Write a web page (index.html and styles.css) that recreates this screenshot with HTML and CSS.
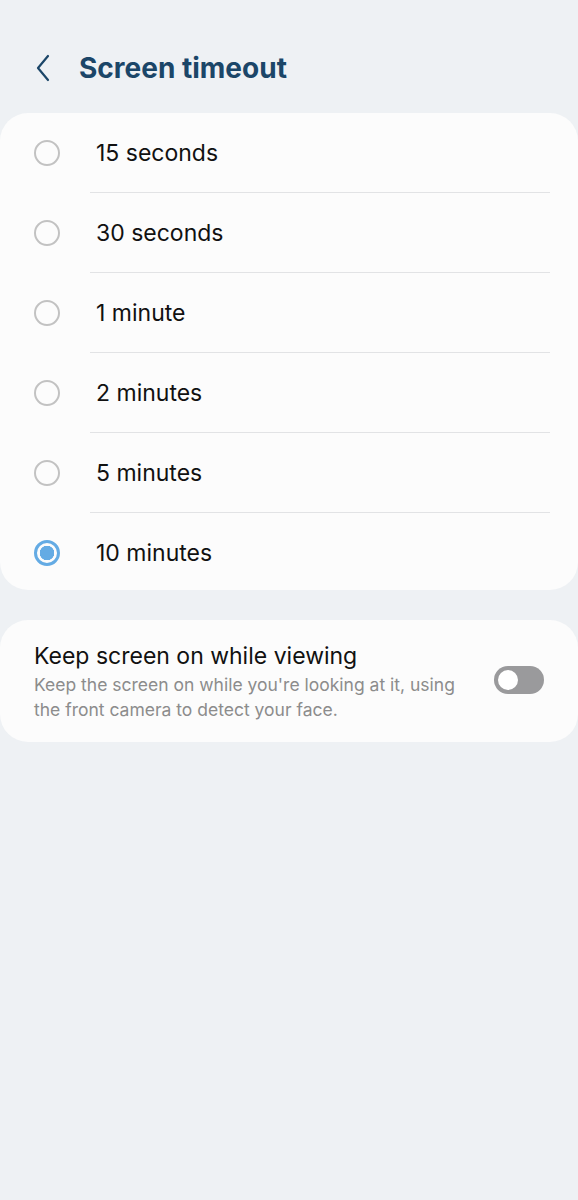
FILE: index.html
```html
<!DOCTYPE html>
<html lang="en">
<head>
    <meta charset="UTF-8">
    <meta name="viewport" content="width=device-width, initial-scale=1.0">
    <title>Screen timeout</title>
    <link rel="stylesheet" href="styles.css">
</head>
<body>
    <div class="header">
        <svg class="back" width="20" height="30" viewBox="0 0 20 30">
            <path d="M14 3 L4 15 L14 27" fill="none" stroke="#1b4668" stroke-width="2.2" stroke-linecap="round" stroke-linejoin="round"/>
        </svg>
        <h1>Screen timeout</h1>
    </div>

    <div class="card options">
        <div class="option"><span class="radio"></span><span class="label">15 seconds</span></div>
        <div class="option"><span class="radio"></span><span class="label">30 seconds</span></div>
        <div class="option"><span class="radio"></span><span class="label">1 minute</span></div>
        <div class="option"><span class="radio"></span><span class="label">2 minutes</span></div>
        <div class="option"><span class="radio"></span><span class="label">5 minutes</span></div>
        <div class="option"><span class="radio checked"></span><span class="label">10 minutes</span></div>
    </div>

    <div class="card setting">
        <div class="setting-text">
            <div class="setting-title">Keep screen on while viewing</div>
            <div class="setting-desc">Keep the screen on while you're looking at it, using the front camera to detect your face.</div>
        </div>
        <span class="switch"><span class="knob"></span></span>
    </div>
</body>
</html>
```

FILE: styles.css
```css
body {
    font-family: Inter, Roboto, "Noto Sans", sans-serif;
    background-color: #eef1f4;
    color: #111;
    margin: 0;
    min-height: 1200px;
}
.header {
    display: flex;
    align-items: center;
    height: 113px;
    padding-left: 34px;
    padding-top: 23px;
    box-sizing: border-box;
}
.back {
    margin-right: 25px;
}
h1 {
    margin: 0;
    font-size: 28px;
    font-weight: 700;
    color: #1b4668;
}
.card {
    background-color: #fcfcfc;
    border-radius: 28px;
}
.options {
    height: 477px;
    overflow: hidden;
}
.option {
    display: flex;
    align-items: center;
    height: 80px;
    position: relative;
}
.option + .option::before {
    content: "";
    position: absolute;
    top: -1px;
    left: 90px;
    right: 28px;
    height: 1px;
    background-color: #e2e3e5;
}
.radio {
    width: 22px;
    height: 22px;
    border: 2px solid #c2c2c2;
    border-radius: 50%;
    margin-left: 34px;
    margin-right: 36px;
    box-sizing: content-box;
}
.radio.checked {
    border: 3px solid #64abe4;
    width: 20px;
    height: 20px;
    background: radial-gradient(circle, #64abe4 0 7px, #fcfcfc 7.5px);
}
.label {
    font-size: 23px;
}
.setting {
    margin-top: 30px;
    display: flex;
    align-items: center;
    padding: 21px 34px 20px 34px;
}
.setting-text {
    flex: 1;
    padding-right: 30px;
}
.setting-title {
    font-size: 23px;
    line-height: 30px;
    margin-bottom: 1px;
}
.setting-desc {
    font-size: 17.5px;
    line-height: 25px;
    color: #8c8c8c;
}
.switch {
    width: 50px;
    height: 28px;
    border-radius: 14px;
    background-color: #9a9a9c;
    display: flex;
    align-items: center;
    padding: 0 2px;
    box-sizing: border-box;
    margin-top: -4px;
}
.knob {
    width: 20px;
    height: 20px;
    border-radius: 50%;
    background-color: #fff;
    border: 2px solid #9a9a9c;
}
```
